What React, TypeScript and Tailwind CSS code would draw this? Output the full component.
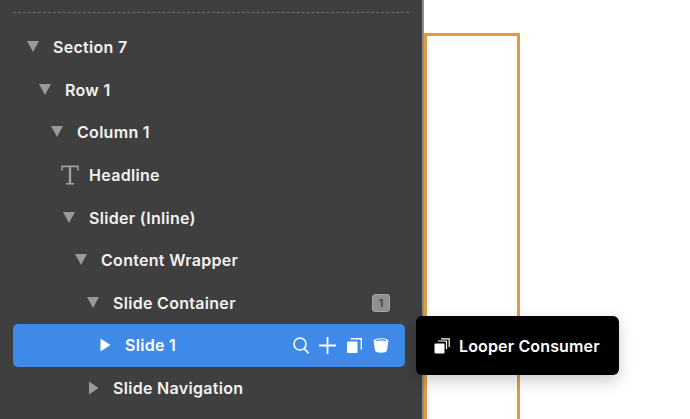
const rows = [
  { label: "Section 7", depth: 0 },
  { label: "Row 1", depth: 1 },
  { label: "Column 1", depth: 2 },
  { label: "Headline", depth: 3, icon: "text" },
  { label: "Slider (Inline)", depth: 3 },
  { label: "Content Wrapper", depth: 4 },
  { label: "Slide Container", depth: 5, badge: "1" },
  { label: "Slide 1", depth: 6, active: true },
  { label: "Slide Navigation", depth: 5, collapsed: true },
];

function Caret({ open, active }: { open: boolean; active?: boolean }) {
  return (
    <svg width="14" height="14" viewBox="0 0 14 14" className="shrink-0 overflow-visible">
      {open ? (
        <path d="M1 1h12L7 12z" fill="#9a9a9a" />
      ) : active ? (
        <path d="M2.5 0.5l10 6.5-10 6.5z" fill="#ffffff" />
      ) : (
        <path d="M3 0.5l9.5 6.5-9.5 6.5z" fill="#9a9a9a" />
      )}
    </svg>
  );
}

function TextIcon() {
  return (
    <svg width="18" height="20" viewBox="0 0 18 20" className="shrink-0" fill="none" stroke="#a0a0a0">
      <path d="M1 5.5V1.4h16V5.5" strokeWidth="1.6" />
      <path d="M9 1.4v17.2" strokeWidth="2.4" />
      <path d="M5 18.8h8" strokeWidth="1.6" />
    </svg>
  );
}

function RowActions() {
  return (
    <div className="ml-auto flex items-center pr-4">
      <svg width="16" height="17" viewBox="0 0 16 17" fill="none" stroke="#fff">
        <circle cx="7" cy="7" r="6" strokeWidth="1.6" />
        <path d="M11.3 11.5l4.2 4.8" strokeWidth="1.8" />
      </svg>
      <svg width="17" height="17" viewBox="0 0 17 17" fill="none" stroke="#fff" className="ml-[10px]">
        <path d="M0 8.5h17M8.5 0v17" strokeWidth="1.8" />
      </svg>
      <svg width="15" height="15" viewBox="0 0 15 15" fill="none" className="ml-[11px]">
        <rect x="0" y="3.5" width="10.5" height="11.5" rx="1" fill="#fff" />
        <path d="M3.5 0.8h10.8V11.5" stroke="#fff" strokeWidth="1.4" />
      </svg>
      <svg width="16" height="16" viewBox="0 0 16 16" fill="none" className="ml-[11px]">
        <path d="M0.5 3.5C2.5 .5 13.5 .5 15.5 3.5L14 13.5C13.4 16.5 2.6 16.5 2 13.5z" fill="#fff" />
        <path d="M2.8 3.8c2-1.2 8.4-1.2 10.4 0" stroke="#3f8ae8" strokeWidth="1.2" />
      </svg>
    </div>
  );
}

export default function App() {
  return (
    <div className="relative flex h-[419px] w-[690px] overflow-hidden bg-white font-['Inter',sans-serif] antialiased">
      <aside className="h-full w-[424px] shrink-0 border-r-2 border-[#8d8d8d] bg-[#3f3f3f]">
        <div className="mx-[13px] mt-3 border-t border-dashed border-[#6e6e6e]" />
        <div className="mt-[13px] flex flex-col">
          {rows.map((row) => (
            <div
              key={row.label}
              className={`mr-[17px] ml-[13px] flex h-[42.6px] items-center rounded-[5px] text-[16px] font-semibold tracking-[0.3px] text-[#f2f2f2] ${
                row.active ? "bg-[#3f8ae8] text-white" : ""
              }`}
            >
              <div
                className="flex items-center"
                style={{ paddingLeft: row.icon ? 48 : 13 + row.depth * 12 }}
              >
                {row.icon ? <TextIcon /> : <Caret open={!row.active && !row.collapsed} active={row.active} />}
                <span className={row.icon ? "ml-[10px]" : "ml-[13px]"}>{row.label}</span>
              </div>
              {row.badge && (
                <span className="mr-[15px] ml-auto flex h-[18px] w-[18px] items-center justify-center rounded-[3px] border border-[#a5a5a5] bg-[#8f8f8f] text-[11px] font-semibold tracking-normal text-[#3f3f3f]">
                  {row.badge}
                </span>
              )}
              {row.active && <RowActions />}
            </div>
          ))}
        </div>
      </aside>

      <main className="min-w-0 flex-1 pt-[33px]">
        <div className="h-[400px] w-[96px] border-[3px] border-b-0 border-[#e19c42]" />
      </main>

      <div className="absolute top-[316px] left-[416px] flex h-[59px] w-[203px] items-center gap-[9px] rounded-[6px] bg-black pl-[18px] text-[16px] font-semibold tracking-[0.15px] text-white shadow-[0_6px_16px_rgba(0,0,0,0.2)]">
        <svg width="16" height="16" viewBox="0 0 16 16" fill="none">
          <rect x="0.5" y="5.5" width="10" height="10" rx="1" fill="#fff" />
          <path d="M4 3h8.5v8" stroke="#fff" strokeWidth="1.2" />
          <path d="M7 .8h8.2V9" stroke="#fff" strokeWidth="1.2" />
        </svg>
        Looper Consumer
      </div>
    </div>
  );
}
